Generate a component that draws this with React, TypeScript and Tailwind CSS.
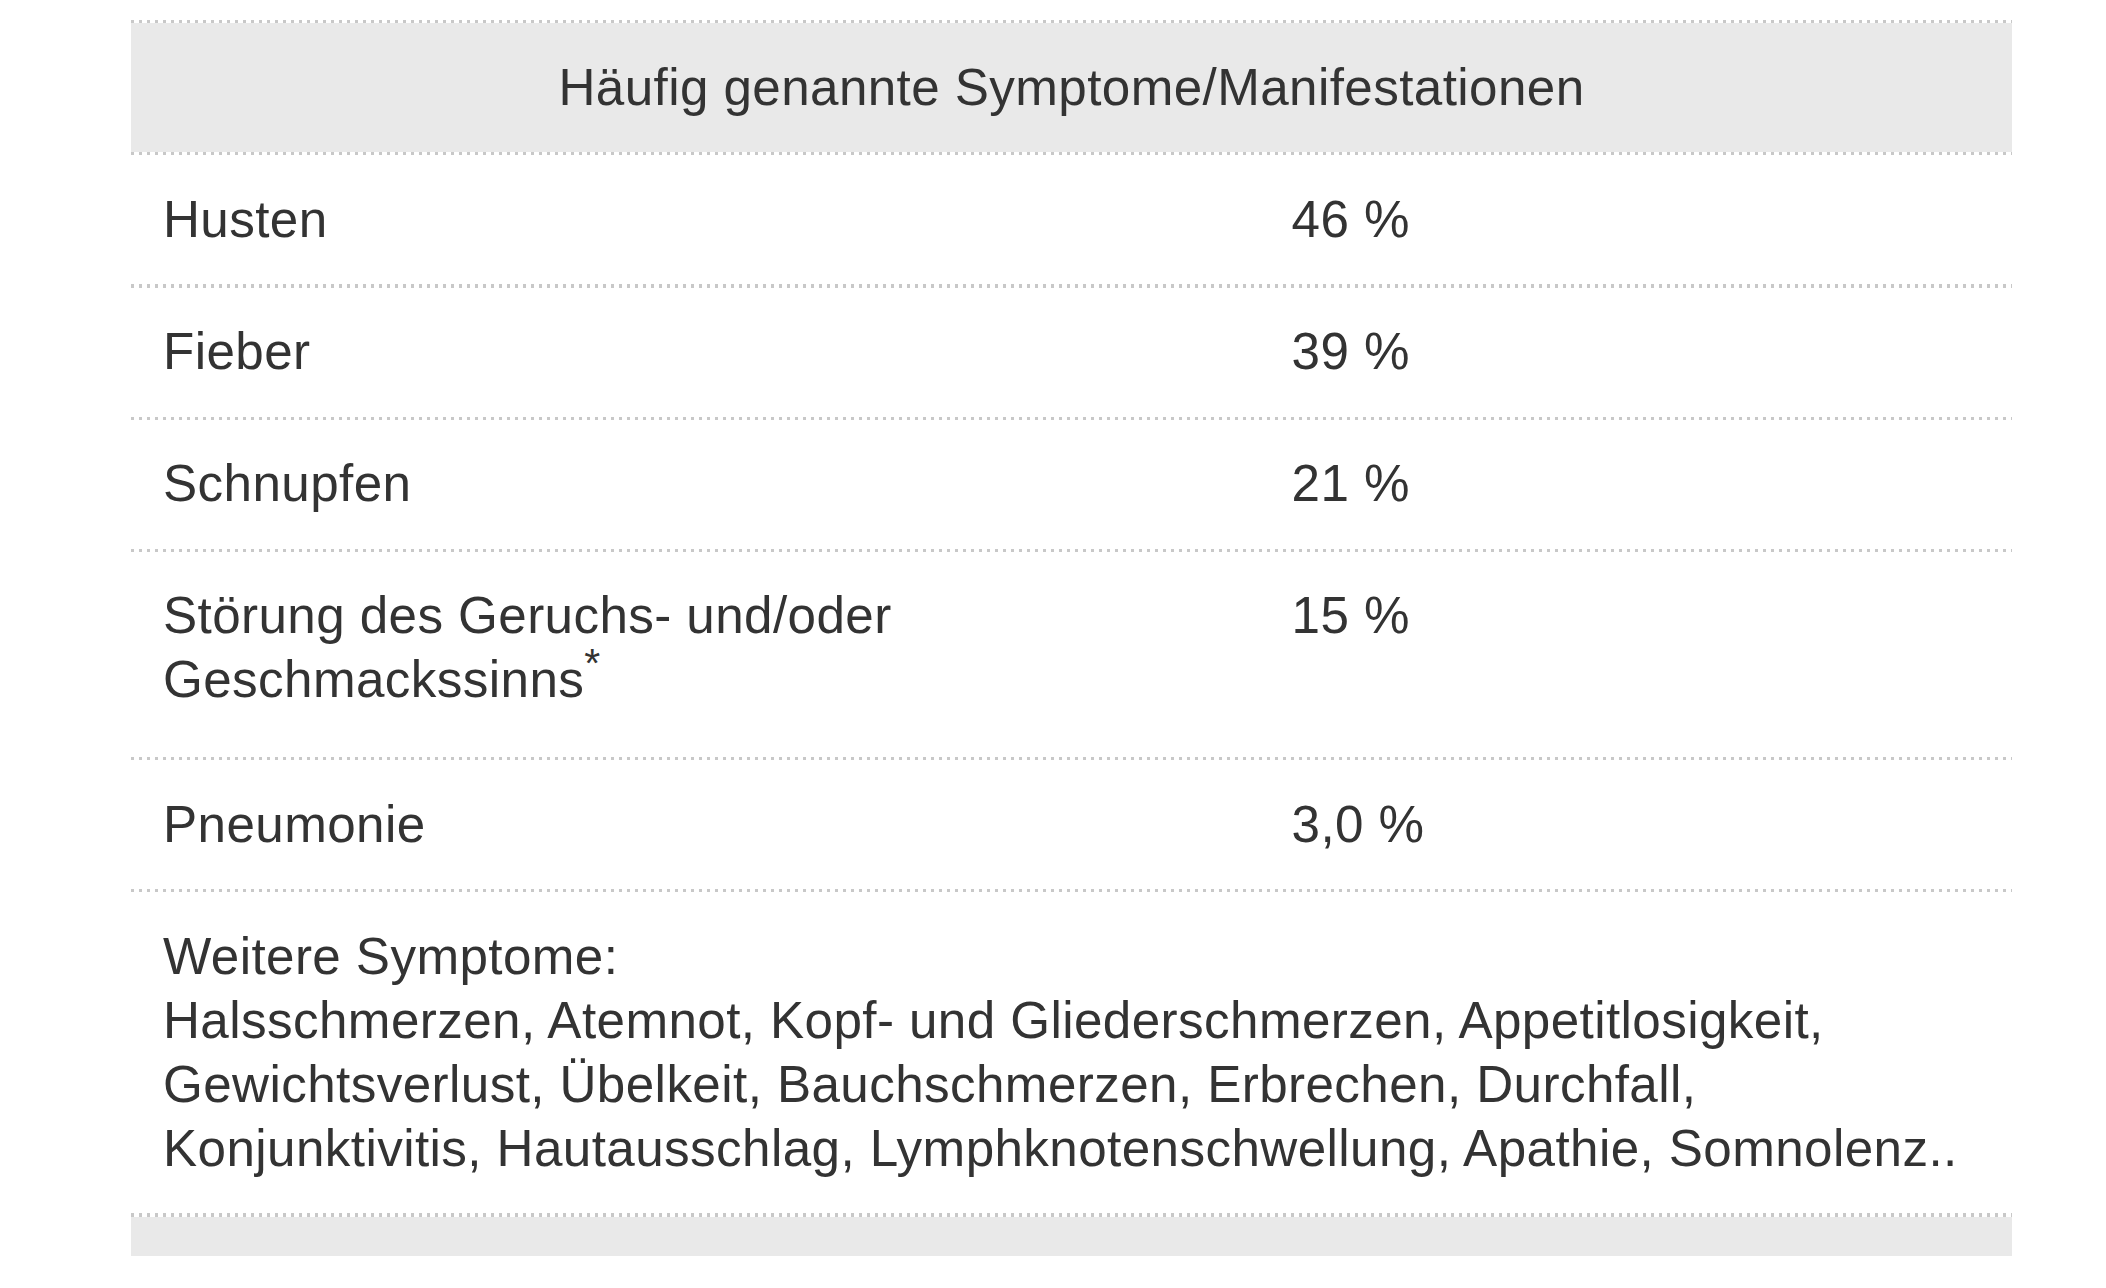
import React from 'react';

const rows: { label: React.ReactNode; value: string; extra?: boolean }[] = [
  { label: 'Husten', value: '46 %' },
  { label: 'Fieber', value: '39 %' },
  { label: 'Schnupfen', value: '21 %' },
  {
    label: (
      <>
        Störung des Geruchs- und/oder Geschmackssinns<sup className="text-[0.8em]">*</sup>
      </>
    ),
    value: '15 %',
    extra: true,
  },
  { label: 'Pneumonie', value: '3,0 %' },
];

// dotted separator, drawn as a gradient so the dot spacing matches
const Dots = () => (
  <div className="h-[3.2px] bg-[linear-gradient(to_right,#c8c8c8_3px,transparent_3px)] bg-[length:8px_3.2px]" />
);

const App: React.FC = () => {
  return (
    <div className="min-h-[1288px] bg-white pt-[20px] pl-[131px] font-[family-name:'Liberation_Sans',Arial,Helvetica,sans-serif] text-[51.2px] leading-[64px] tracking-[0.4px] text-[#333]">
      <div className="w-[1881px]">
        <Dots />
        <div className="bg-[#e9e9e9] py-[32.5px] text-center">Häufig genannte Symptome/Manifestationen</div>
        <Dots />

        {rows.map((row, i) => (
          <React.Fragment key={i}>
            <div className="grid grid-cols-[60%_40%]">
              <div className={`px-[32px] pt-[32.5px] ${row.extra ? 'pb-[44.5px]' : 'pb-[32.5px]'}`}>{row.label}</div>
              <div className="px-[32px] py-[32.5px]">{row.value}</div>
            </div>
            <Dots />
          </React.Fragment>
        ))}

        <div className="px-[32px] py-[32.5px]">
          Weitere Symptome:
          <br />
          Halsschmerzen, Atemnot, Kopf- und Gliederschmerzen, Appetitlosigkeit, Gewichtsverlust, Übelkeit,
          Bauchschmerzen, Erbrechen, Durchfall, Konjunktivitis, Hautausschlag, Lymphknotenschwellung, Apathie,
          Somnolenz..
        </div>
        <Dots />
        <div className="h-[39px] bg-[#e9e9e9]" />
      </div>
    </div>
  );
};

export default App;
